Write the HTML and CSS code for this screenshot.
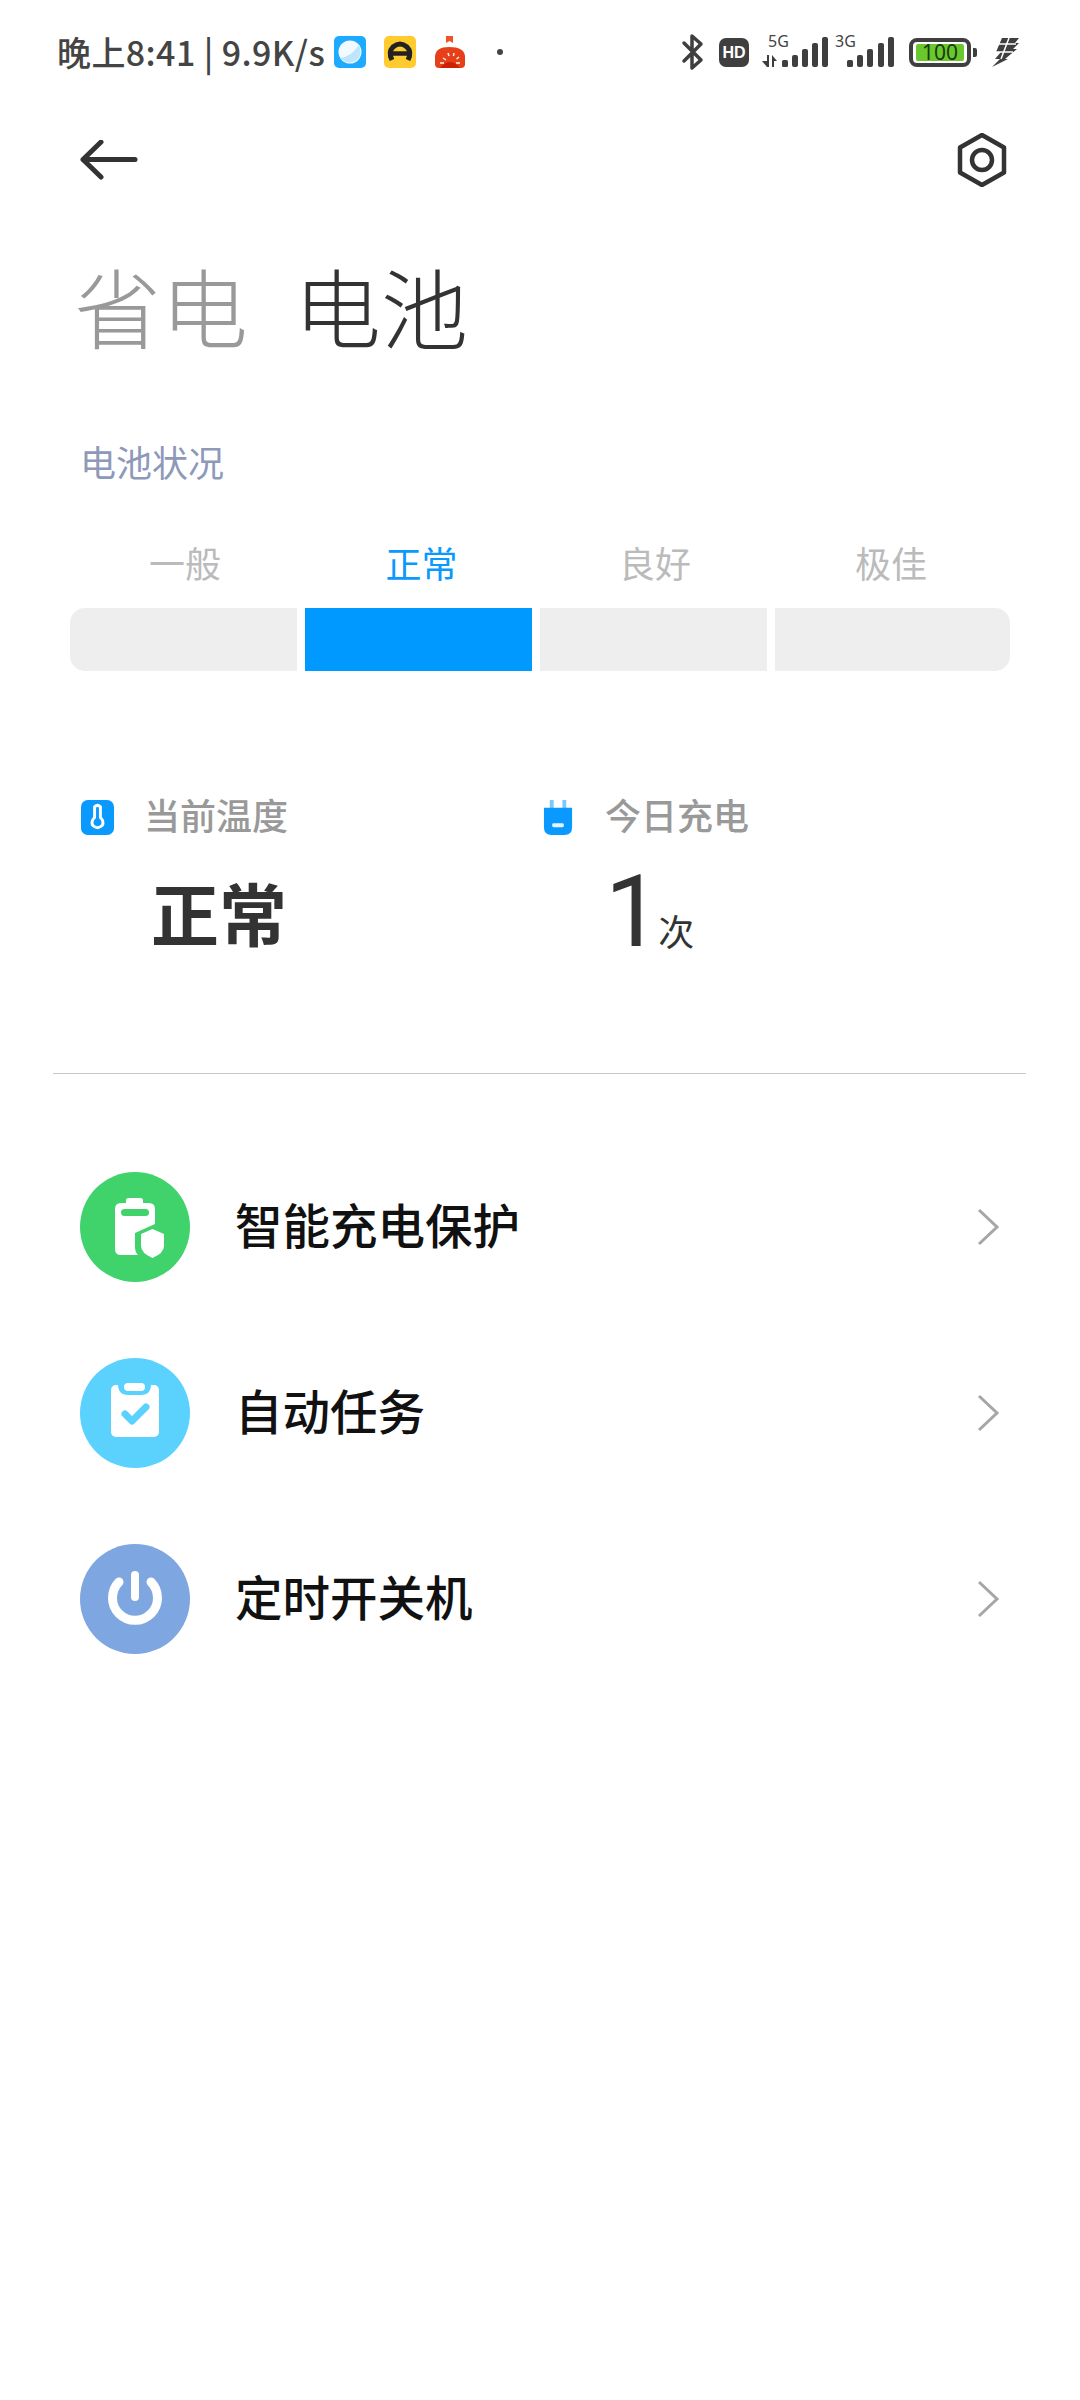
FILE: index.html
```html
<!DOCTYPE html>
<html lang="zh-CN">
<head>
    <meta charset="UTF-8">
    <meta name="viewport" content="width=device-width, initial-scale=1.0">
    <title>电池</title>
    <link rel="stylesheet" href="styles.css">
</head>
<body>
    <div class="status-bar">
        <div class="status-left">
            <span class="status-text">晚上8:41 | 9.9K/s</span>
            <svg class="app-icon first" viewBox="0 0 32 32">
                <rect width="32" height="32" rx="5" fill="#1eaaff"/>
                <circle cx="16" cy="16" r="11.5" fill="#f2faff"/>
                <path d="M6 22 Q17 21 25 9 Q29 18 23 24 Q14 30 6 22Z" fill="#c0e4fb"/>
            </svg>
            <svg class="app-icon" viewBox="0 0 32 32">
                <rect width="32" height="32" rx="5" fill="#ffcb2f"/>
                <path d="M8 24 Q4 16 9 11 Q16 5 23 11 Q28 16 24 24" fill="none" stroke="#222" stroke-width="5"/>
                <path d="M8 17.500 H24" stroke="#222" stroke-width="4.500"/>
            </svg>
            <svg class="app-icon" viewBox="0 0 32 32">
                <path d="M12 0 H19 V7 L15.500 5 L12 7Z" fill="#f0522a"/>
                <path d="M1 20 Q2 11 15 11 Q30 11 31 20 V28 Q31 32 27 32 H5 Q1 32 1 28Z" fill="#e5401a"/>
                <path d="M6 32 Q16 20 26 32Z" fill="#cc1f08"/>
                <path d="M9 22 L12 24 M14 17 L15 20 M20 17 L19.500 20 M25 21 L22.500 23 M22 27 L26 27 M6 27 L10 27" stroke="#fff0e0" stroke-width="1.500"/>
            </svg>
            <span class="dot"></span>
        </div>
        <div class="status-right">
            <svg class="bt-icon" viewBox="0 0 24 38">
                <path d="M3 10 L20 27 L11 35 V3 L20 11 L3 28" fill="none" stroke="#3f3f3f" stroke-width="3.500" stroke-linecap="round" stroke-linejoin="round"/>
            </svg>
            <div class="hd-badge">HD</div>
            <div class="signal five">
                <span class="signal-type">5G</span>
                <svg class="signal-bars" viewBox="0 0 67 30">
                    <path d="M6 18 H8 V30 H6 L1 24 H6Z M11 18 L16 24 H13 V30 H11Z" fill="#3f3f3f"/>
                    <rect x="21" y="23" width="6" height="7" rx="1.500" fill="#3f3f3f"/>
                    <rect x="31" y="18" width="6" height="12" rx="2" fill="#3f3f3f"/>
                    <rect x="41" y="12" width="6" height="18" rx="2" fill="#3f3f3f"/>
                    <rect x="51" y="6" width="6" height="24" rx="2" fill="#3f3f3f"/>
                    <rect x="61" y="0" width="6" height="30" rx="2" fill="#3f3f3f"/>
                </svg>
            </div>
            <div class="signal three">
                <span class="signal-type">3G</span>
                <svg class="signal-bars" viewBox="0 0 47 30">
                    <rect x="0" y="23" width="6" height="7" rx="1.500" fill="#3f3f3f"/>
                    <rect x="10" y="18" width="6" height="12" rx="2" fill="#3f3f3f"/>
                    <rect x="20" y="12" width="6" height="18" rx="2" fill="#3f3f3f"/>
                    <rect x="31" y="6" width="6" height="24" rx="2" fill="#3f3f3f"/>
                    <rect x="41" y="0" width="6" height="30" rx="2" fill="#3f3f3f"/>
                </svg>
            </div>
            <div class="battery">
                <div class="battery-body"><span class="battery-level">100</span></div>
                <span class="battery-cap"></span>
            </div>
            <svg class="charge-icon" viewBox="0 0 27 29">
                <path d="M10 0 H27 L23 5 H27 L21 11 H25 L13 21 L16 21 L0 29 L8 21 H3 L9 14 H4Z" fill="#3f3f3f"/>
                <path d="M6 6 H24 M3 14 H21 M17 0 L9 21" fill="none" stroke="#fff" stroke-width="1.500"/>
            </svg>
        </div>
    </div>

    <div class="toolbar">
        <svg class="back-icon" viewBox="0 0 58 40">
            <path d="M55 19.500 H3 M21 2 L3 19.500 L21 37" fill="none" stroke="#333" stroke-width="5" stroke-linecap="round" stroke-linejoin="round"/>
        </svg>
        <svg class="settings-icon" viewBox="0 0 50 54">
            <path d="M25 2 L47 14.500 V39.500 L25 52 L3 39.500 V14.500Z" fill="none" stroke="#333" stroke-width="4.500" stroke-linejoin="round"/>
            <circle cx="25" cy="27" r="10" fill="none" stroke="#333" stroke-width="4.500"/>
        </svg>
    </div>

    <div class="tabs">
        <span class="tab">省电</span>
        <span class="tab active">电池</span>
    </div>

    <h2 class="section-title">电池状况</h2>

    <div class="levels">
        <div class="level"><span class="level-name">一般</span><div class="level-bar first"></div></div>
        <div class="level current"><span class="level-name">正常</span><div class="level-bar"></div></div>
        <div class="level"><span class="level-name">良好</span><div class="level-bar"></div></div>
        <div class="level last"><span class="level-name">极佳</span><div class="level-bar"></div></div>
    </div>

    <div class="stats">
        <div class="stat">
            <div class="stat-label">
                <svg class="stat-icon" viewBox="0 0 34 36">
                    <rect width="34" height="36" rx="7" fill="#0a99ff"/>
                    <path d="M14 7 Q17 4 20 7 V18 Q24 22 22 26 Q17 31 12 26 Q10 22 14 18Z" fill="none" stroke="#fff" stroke-width="3"/>
                </svg>
                <span class="stat-name">当前温度</span>
            </div>
            <div class="stat-value word">正常</div>
        </div>
        <div class="stat">
            <div class="stat-label">
                <svg class="stat-icon" viewBox="0 0 34 36">
                    <path d="M8 0 H12 V9 H8Z M21 0 H25 V9 H21Z" fill="#7cc8fb"/>
                    <path d="M2 8 H31 V28 Q31 36 23 36 H10 Q2 36 2 28Z" fill="#0a99ff"/>
                    <rect x="10.500" y="24" width="12" height="4" rx="1.500" fill="#e4f4ff"/>
                </svg>
                <span class="stat-name">今日充电</span>
            </div>
            <div class="stat-value count"><span class="count-num">1</span><span class="count-unit">次</span></div>
        </div>
    </div>

    <div class="divider"></div>

    <div class="menu">
        <div class="menu-item">
            <div class="menu-icon green">
                <svg viewBox="0 0 110 110">
                    <path d="M46 28 Q46 26 49 26 H60 Q63 26 63 28 V31 H69 Q75 31 75 37 V52 L55 61 V76 Q55 80 58 83 H41 Q35 83 35 77 V37 Q35 31 41 31 H46Z" fill="#fff"/>
                    <rect x="41" y="37" width="28" height="7" rx="3.500" fill="#40d36c"/>
                    <path d="M72.500 57 L84 62 V74 Q84 81 72.500 86 Q61 81 61 74 V62Z" fill="#fff"/>
                </svg>
            </div>
            <span class="menu-label">智能充电保护</span>
            <svg class="chevron" viewBox="0 0 24 38"><path d="M3 2 L21 19 L3 36" fill="none" stroke="#a6a6a6" stroke-width="3"/></svg>
        </div>
        <div class="menu-item">
            <div class="menu-icon sky">
                <svg viewBox="0 0 110 110">
                    <rect x="31" y="27" width="48" height="52" rx="5" fill="#fff"/>
                    <path d="M38 26 Q38 37 48 37 H61 Q71 37 71 26Z" fill="#5bd2fe"/>
                    <rect x="44" y="25" width="21" height="8" rx="4" fill="#fff"/>
                    <path d="M45 56 L52 63 L66 49" fill="none" stroke="#5bd2fe" stroke-width="7" stroke-linecap="round" stroke-linejoin="round"/>
                </svg>
            </div>
            <span class="menu-label">自动任务</span>
            <svg class="chevron" viewBox="0 0 24 38"><path d="M3 2 L21 19 L3 36" fill="none" stroke="#a6a6a6" stroke-width="3"/></svg>
        </div>
        <div class="menu-item">
            <div class="menu-icon periwinkle">
                <svg viewBox="0 0 110 110">
                    <path d="M39 38 A22.500 22.500 0 1 0 71 38" fill="none" stroke="#fff" stroke-width="9" stroke-linecap="round"/>
                    <path d="M55 31 V53" fill="none" stroke="#fff" stroke-width="8" stroke-linecap="round"/>
                </svg>
            </div>
            <span class="menu-label">定时开关机</span>
            <svg class="chevron" viewBox="0 0 24 38"><path d="M3 2 L21 19 L3 36" fill="none" stroke="#a6a6a6" stroke-width="3"/></svg>
        </div>
    </div>
</body>
</html>
```

FILE: styles.css
```css
* {
    box-sizing: border-box;
}
html, body {
    margin: 0;
    padding: 0;
}
body {
    width: 1080px;
    height: 2400px;
    background: #fff;
    color: #333;
    font-family: "Noto Sans CJK SC", "Noto Sans", sans-serif;
    overflow: hidden;
}

/* status bar */
.status-bar {
    display: flex;
    justify-content: space-between;
    align-items: center;
    height: 104px;
    padding: 0 61px 0 57px;
}
.status-left {
    display: flex;
    align-items: center;
}
.status-text {
    width: 267px;
    margin-bottom: 2px;
    font-size: 34px;
    font-weight: 500;
    color: #444;
    white-space: nowrap;
    letter-spacing: 0.4px;
}
.app-icon {
    width: 32px;
    height: 32px;
    margin-left: 18px;
}
.app-icon.first {
    margin-left: 10px;
}
.dot {
    width: 6px;
    height: 6px;
    margin-left: 31px;
    border-radius: 50%;
    background: #444;
}
.status-right {
    display: flex;
    align-items: center;
}
.bt-icon {
    width: 24px;
    height: 38px;
}
.hd-badge {
    width: 30px;
    height: 29px;
    margin-left: 14px;
    border-radius: 7px;
    background: #3f3f3f;
    color: #fff;
    font: bold 16px/29px "Liberation Sans", sans-serif;
    text-align: center;
}
.signal {
    position: relative;
    height: 30px;
}
.signal.five {
    width: 67px;
    margin-left: 12px;
}
.signal.three {
    width: 47px;
    margin-left: 19px;
}
.signal-bars {
    display: block;
    width: 100%;
    height: 30px;
}
.signal-type {
    position: absolute;
    top: -4px;
    left: 7px;
    font: 16px/16px "Noto Sans", sans-serif;
    color: #444;
}
.signal.three .signal-type {
    left: -12px;
}
.battery {
    display: flex;
    align-items: center;
    margin-left: 15px;
}
.battery-body {
    width: 62px;
    height: 29px;
    padding: 2px 3px;
    border: 4px solid #3f3f3f;
    border-radius: 8px;
}
.battery-level {
    display: block;
    height: 17px;
    border-radius: 2px;
    background: #68c82d;
    color: #1b3a0c;
    font: 21px/17px "Noto Sans", sans-serif;
    text-align: center;
}
.battery-cap {
    width: 4px;
    height: 9px;
    margin-left: 2px;
    border-radius: 0 2px 2px 0;
    background: #3f3f3f;
}
.charge-icon {
    width: 27px;
    height: 29px;
    margin-left: 15px;
}

/* toolbar + tabs */
.toolbar {
    display: flex;
    justify-content: space-between;
    align-items: center;
    height: 112px;
    padding: 0 73px 0 80px;
}
.back-icon {
    width: 58px;
    height: 40px;
}
.settings-icon {
    width: 50px;
    height: 54px;
}
.tabs {
    display: flex;
    gap: 46px;
    padding: 44px 0 0 74px;
    font-size: 87px;
    font-weight: 300;
    line-height: 90px;
}
.tab {
    color: #999;
}
.tab.active {
    color: #333;
}

.section-title {
    margin: 88px 0 0 80px;
    color: #8e99ba;
    font-size: 36px;
    font-weight: 400;
    line-height: 46px;
}

/* battery condition scale */
.levels {
    display: grid;
    grid-template-columns: 227px 227px 227px 235px;
    gap: 8px;
    margin: 52px 0 0 70px;
}
.level {
    display: flex;
    flex-direction: column;
    align-items: center;
}
.level-name {
    height: 52px;
    margin-bottom: 20px;
    padding-left: 3px;
    color: #bbb;
    font-size: 36px;
    line-height: 52px;
}
.level-bar {
    width: 100%;
    height: 63px;
    background: #eee;
}
.level:first-child .level-bar {
    border-radius: 15px 0 0 15px;
}
.level.last .level-bar {
    border-radius: 0 15px 15px 0;
}
.level.last .level-name {
    padding: 0 3px 0 0;
}
.level.current .level-name {
    padding-left: 6px;
    color: #0a99ff;
}
.level.current .level-bar {
    background: #0099ff;
}

/* stats */
.stats {
    display: flex;
    padding: 124px 0 0 81px;
}
.stat {
    width: 461px;
}
.stat-label {
    display: flex;
    align-items: center;
    gap: 30px;
    height: 44px;
    color: #999;
    font-size: 36px;
    font-weight: 500;
}
.stat-name {
    margin-bottom: 6px;
}
.stat-icon {
    width: 33px;
    height: 35px;
}
.stat-value {
    height: 90px;
    color: #333;
}
.stat-value.word {
    margin: 28px 0 0 70px;
    font-size: 68px;
    font-weight: 700;
    line-height: 90px;
}
.stat-value.count {
    display: flex;
    align-items: baseline;
    margin: 28px 0 0 63px;
    line-height: 90px;
}
.count-num {
    font-family: Roboto, sans-serif;
    font-size: 100px;
}
.count-unit {
    margin-left: -3px;
    font-size: 36px;
    line-height: 36px;
}

.divider {
    height: 1px;
    margin: 116px 54px 0 53px;
    background: #c8c8c8;
}

/* menu */
.menu {
    padding-top: 60px;
}
.menu-item {
    display: flex;
    align-items: center;
    height: 186px;
    padding: 0 80px 0 80px;
}
.menu-icon {
    width: 110px;
    height: 110px;
    border-radius: 50%;
}
.menu-icon svg {
    display: block;
    width: 110px;
    height: 110px;
}
.menu-icon.green {
    background: #40d36c;
}
.menu-icon.sky {
    background: #5bd2fe;
}
.menu-icon.periwinkle {
    background: #7ea6e0;
}
.menu-label {
    flex: 1;
    margin: 0 0 8px 45px;
    color: #111;
    font-size: 47.5px;
    font-weight: 500;
}
.chevron {
    width: 24px;
    height: 38px;
}
```
